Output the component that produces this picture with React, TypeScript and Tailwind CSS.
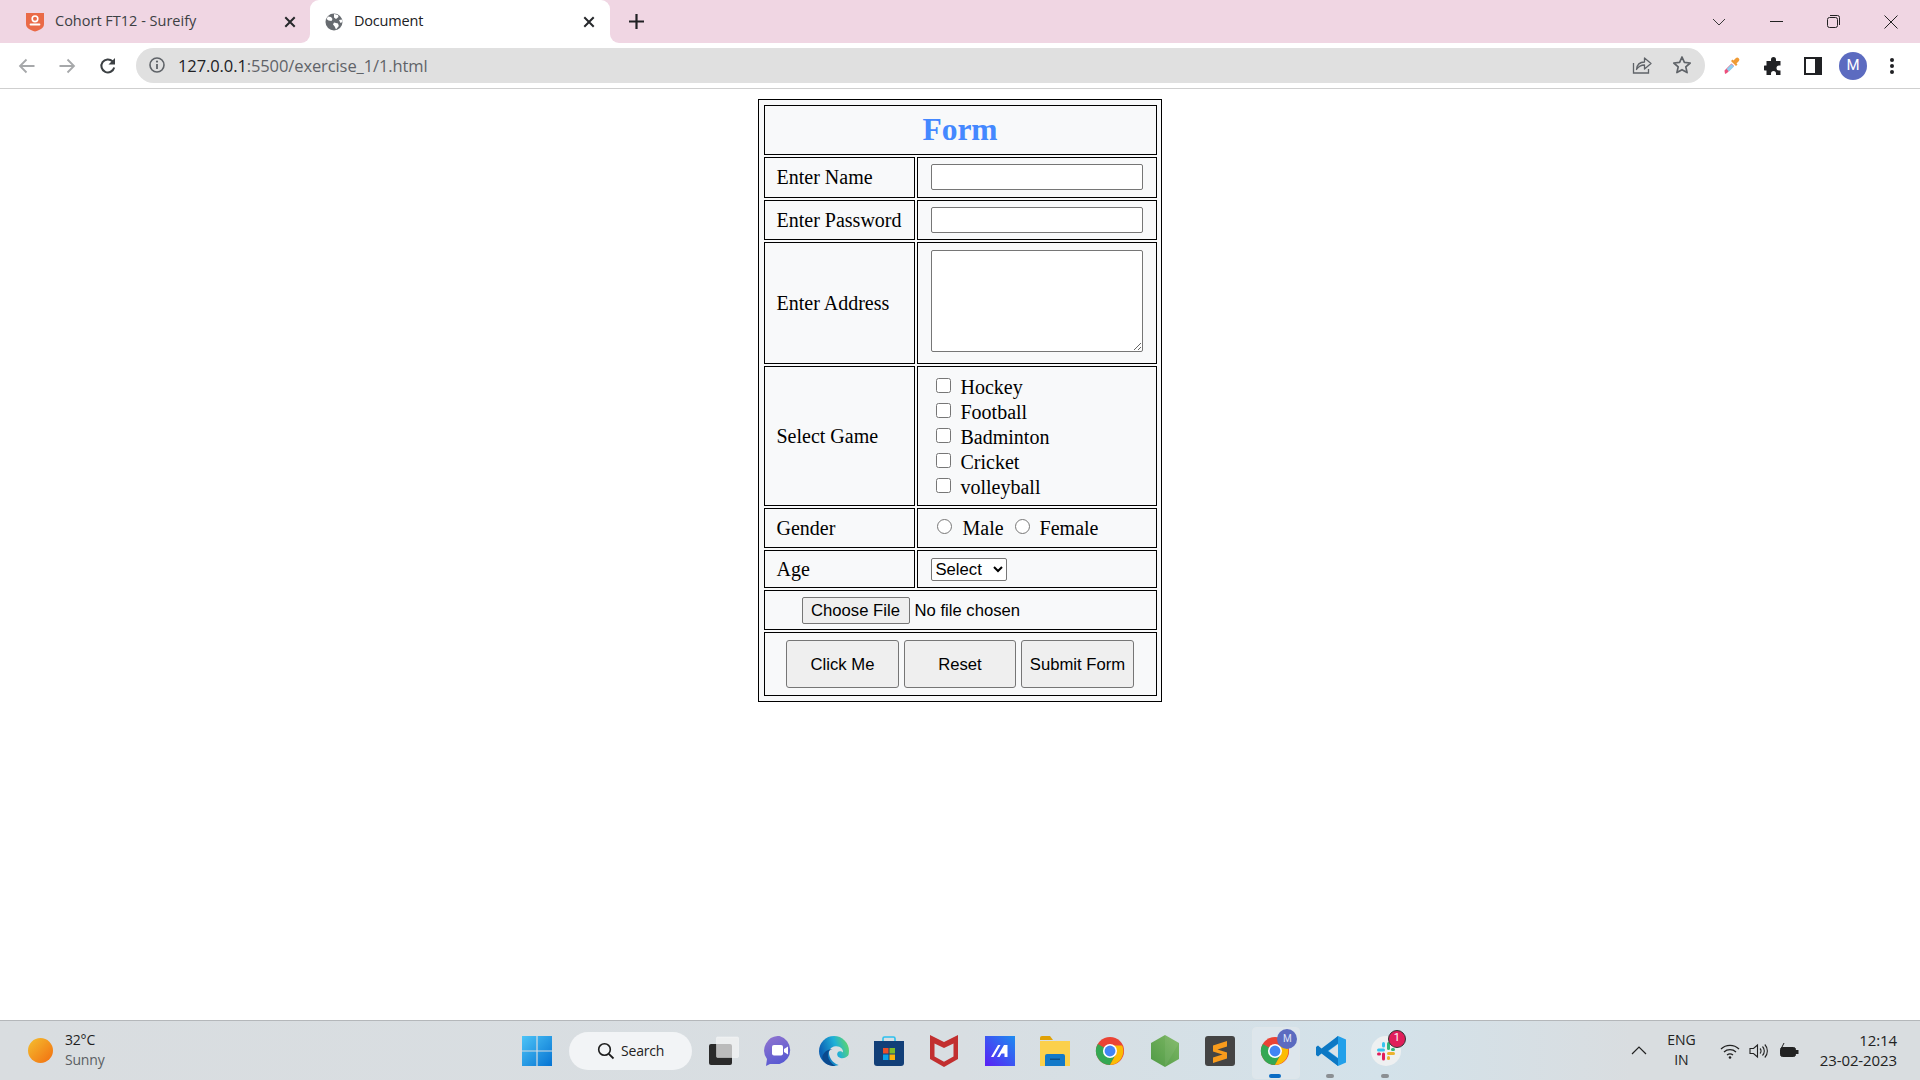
import React from "react";

const ui = "font-['Open_Sans','Noto_Sans',sans-serif]";

function TabClose() {
  return (
    <svg width="12" height="12" viewBox="0 0 12 12" className="shrink-0">
      <path d="M2 2l8 8M10 2l-8 8" stroke="#26282b" strokeWidth="2" strokeLinecap="square" />
    </svg>
  );
}

function TabStrip() {
  return (
    <div className="flex h-[43px] items-stretch bg-[#f0d6e3] text-[#3c4043] shrink-0">
      <div className="relative flex w-[310px] items-center pl-[25px] pr-[14px]">
        <svg width="20" height="20" viewBox="0 0 20 20" className="shrink-0">
          <path d="M1 1h18v11c0 4-4 6-9 7.500C5 18 1 16 1 12z" fill="#ea6a47" />
          <circle cx="10" cy="6.800" r="2.800" fill="none" stroke="#fff" strokeWidth="1.600" />
          <path d="M5.500 12.500h9" stroke="#fff" strokeWidth="1.800" strokeLinecap="round" />
        </svg>
        <span className={`ml-[10px] mb-[2px] flex-1 text-[14.5px] ${ui} whitespace-nowrap`}>Cohort FT12 - Sureify</span>
        <TabClose />
      </div>
      <div className="relative flex w-[300px] items-center rounded-t-[9px] bg-white pl-[15px] pr-[15px]">
        <div className="absolute bottom-0 left-[-9px] h-[9px] w-[9px] bg-white">
          <div className="h-full w-full rounded-br-[9px] bg-[#f0d6e3]" />
        </div>
        <div className="absolute bottom-0 right-[-9px] h-[9px] w-[9px] bg-white">
          <div className="h-full w-full rounded-bl-[9px] bg-[#f0d6e3]" />
        </div>
        <svg width="18" height="18" viewBox="0 0 18 18" className="shrink-0">
          <circle cx="9" cy="9" r="8.500" fill="#676b70" />
          <path d="M3 3.500l3 .5 1.500 2-1 2-3-.5L1.500 6zM9 1l4 1 .5 2-2.500 2L9 4.500zM9 9.500l4 1 .8 2.500-2.800 3.500-1.300-3-1.700-2zM14 7l2.800-.5.7 2.500-2 1z" fill="#fff" />
        </svg>
        <span className={`ml-[11px] mb-[2px] flex-1 text-[14.5px] ${ui} tracking-[-0.2px] text-[#202124]`}>Document</span>
        <TabClose />
      </div>
      <div className="flex w-[52px] items-center justify-center pl-[1px]">
        <svg width="15" height="15" viewBox="0 0 15 15">
          <path d="M7.500 0v15M0 7.500h15" stroke="#202124" strokeWidth="2.200" />
        </svg>
      </div>
      <div className="flex flex-1 items-center justify-end">
        <svg width="14" height="8" viewBox="0 0 14 8" className="mr-[44px]">
          <path d="M1 1l6 6 6-6" fill="none" stroke="#3a3a3a" strokeWidth="1" />
        </svg>
        <div className="h-[1.5px] w-[13px] bg-[#222] mr-[44px]" />
        <svg width="13" height="13" viewBox="0 0 13 13" className="mr-[44px]">
          <rect x="0.500" y="2.500" width="10" height="10" rx="2" fill="none" stroke="#222" />
          <path d="M3 .5h7.500a2 2 0 0 1 2 2V10" fill="none" stroke="#222" />
        </svg>
        <svg width="14" height="14" viewBox="0 0 14 14" className="mr-[22px]">
          <path d="M.5.5l13 13M13.500.5l-13 13" stroke="#222" strokeWidth="1" />
        </svg>
      </div>
    </div>
  );
}

function Toolbar() {
  return (
    <div className="flex h-[46px] items-center border-b border-[#cfcfcf] bg-white shrink-0">
      <div className="flex w-[136px] items-center">
        <svg width="18" height="16" viewBox="0 0 18 16" className="ml-[18px]">
          <path d="M16.500 8H2M8.500 1.500L2 8l6.500 6.500" fill="none" stroke="#a6a8aa" strokeWidth="1.800" />
        </svg>
        <svg width="18" height="16" viewBox="0 0 18 16" className="ml-[22px]">
          <path d="M1.500 8H16M9.500 1.500L16 8l-6.500 6.500" fill="none" stroke="#a6a8aa" strokeWidth="1.800" />
        </svg>
        <svg width="18" height="18" viewBox="0 0 18 18" className="ml-[23px]">
          <path d="M15.200 10.500A6.500 6.500 0 1 1 13.500 4.300" fill="none" stroke="#3c4043" strokeWidth="2" />
          <path d="M16 1v6.500H9.500z" fill="#3c4043" />
        </svg>
      </div>
      <div className="flex h-[35px] w-[1569px] items-center rounded-full bg-[#e0e0e0] mb-[1px]">
        <svg width="16" height="16" viewBox="0 0 16 16" className="ml-[13px]">
          <circle cx="8" cy="8" r="7" fill="none" stroke="#5f6368" strokeWidth="1.600" />
          <path d="M8 7v5" stroke="#5f6368" strokeWidth="1.800" />
          <circle cx="8" cy="4.600" r="1.100" fill="#5f6368" />
        </svg>
        <span className={`ml-[13px] mt-[2px] flex-1 text-[16.5px] tracking-[-0.1px] text-[#5f6368] ${ui}`}>
          <span className="text-[#202124]">127.0.0.1</span>:5500/exercise_1/1.html
        </span>
        <svg width="20" height="20" viewBox="0 0 20 20" className="mr-[20px]">
          <path d="M1.500 8v10h15v-4" fill="none" stroke="#5f6368" strokeWidth="1.300" />
          <path d="M4.500 14.500c.5-5 4-7.500 8-7.500V3l6.500 5.500-6.500 5.500v-4c-3.500 0-6 1.500-8 4.500z" fill="none" stroke="#5f6368" strokeWidth="1.300" strokeLinejoin="round" />
        </svg>
        <svg width="20" height="20" viewBox="0 0 20 20" className="mr-[13px]">
          <path d="M10 2l2.400 5.400 5.800.6-4.400 3.900 1.300 5.700L10 14.700 4.900 17.600l1.300-5.700L1.800 8l5.800-.6z" fill="none" stroke="#5f6368" strokeWidth="1.700" strokeLinejoin="round" />
        </svg>
      </div>
      <div className="flex flex-1 items-center">
        <svg width="18" height="20" viewBox="0 0 18 20" className="ml-[18px]">
          <path d="M2 18l2-1 7-7-2.500-2.500-7 7z" fill="#ec4f7c" />
          <path d="M3.500 13l5-5 2.500 2.500-5 5z" fill="#8fd0ef" />
          <path d="M8 5l5 5 1.500-1.500-1-1 2.200-2.200a2 2 0 0 0-3-3L10.500 4.500l-1-1z" fill="#ef9a35" />
        </svg>
        <svg width="20" height="20" viewBox="0 0 20 20" className="ml-[23px]">
          <path d="M7 3.500a2.500 2.500 0 0 1 5 0V5h4.500v4.500H15a2.500 2.500 0 0 0 0 5h1.500V19H12v-1.500a2.500 2.500 0 0 0-5 0V19H2.500v-4.500H1a2.500 2.500 0 0 1 0-5h1.500V5H7z" fill="#202124" />
        </svg>
        <svg width="18" height="18" viewBox="0 0 18 18" className="ml-[20px]">
          <rect width="18" height="18" fill="#202124" />
          <rect x="2" y="2" width="9" height="14" fill="#fff" />
        </svg>
        <div className="ml-[17px] flex h-[28px] w-[28px] items-center justify-center rounded-full bg-[#5c6bc0] font-['Roboto',sans-serif] text-[15px] text-white">M</div>
        <svg width="6" height="18" viewBox="0 0 6 18" className="ml-[22px]">
          <circle cx="3" cy="3" r="2" fill="#202124" />
          <circle cx="3" cy="9" r="2" fill="#202124" />
          <circle cx="3" cy="15" r="2" fill="#202124" />
        </svg>
      </div>
    </div>
  );
}

const cell = "border border-black align-middle";

function FormTable() {
  const games = ["Hockey", "Football", "Badminton", "Cricket", "volleyball"];
  return (
    <table className="mx-auto w-[404px] table-fixed border-separate border-spacing-[2.5px] border border-black bg-[#f8f9fa] p-[2.5px] font-['Liberation_Serif',serif] text-[20px] text-black">
      <colgroup>
        <col className="w-[151px]" />
        <col />
      </colgroup>
      <tbody>
        <tr>
          <td colSpan={2} className={`${cell} h-[50.5px] text-center text-[31.5px] font-bold text-[#4488ff]`}>Form</td>
        </tr>
        <tr>
          <td className={`${cell} h-[40.5px] pl-[12px]`}>Enter Name</td>
          <td className={`${cell} pl-[13px]`}>
            <input type="text" className="block h-[26px] w-[212px] rounded-[2px] border border-[#767676] bg-white" />
          </td>
        </tr>
        <tr>
          <td className={`${cell} h-[40.5px] pl-[12px]`}>Enter Password</td>
          <td className={`${cell} pl-[13px]`}>
            <input type="password" className="block h-[26px] w-[212px] rounded-[2px] border border-[#767676] bg-white" />
          </td>
        </tr>
        <tr>
          <td className={`${cell} h-[121.5px] pl-[12px]`}>Enter Address</td>
          <td className={`${cell} pl-[13px]`}>
            <textarea className="mb-[4px] block h-[102px] w-[212px] rounded-[2px] border border-[#767676] bg-white" />
          </td>
        </tr>
        <tr>
          <td className={`${cell} h-[140.5px] pl-[12px]`}>Select Game</td>
          <td className={`${cell} pl-[18px] pt-[3px]`}>
            {games.map((g) => (
              <div key={g} className="flex h-[25px] items-start gap-[10px] leading-[25px]">
                <input type="checkbox" className="mt-[3px] h-[15px] w-[15px] m-0" />
                <span>{g}</span>
              </div>
            ))}
          </td>
        </tr>
        <tr>
          <td className={`${cell} h-[40px] pl-[12px]`}>Gender</td>
          <td className={`${cell} pl-[19px]`}>
            <div className="flex h-[25px] items-start leading-[25px]">
              <input type="radio" name="g" className="mt-[3px] h-[15px] w-[15px]" />
              <span className="ml-[11px]">Male</span>
              <input type="radio" name="g" className="ml-[11px] mt-[3px] h-[15px] w-[15px]" />
              <span className="ml-[10px]">Female</span>
            </div>
          </td>
        </tr>
        <tr>
          <td className={`${cell} h-[38px] pl-[12px]`}>Age</td>
          <td className={`${cell} pl-[13px]`}>
            <select className="block h-[23px] w-[76px] rounded-[2px] border border-[#767676] bg-white font-['Liberation_Sans',sans-serif] text-[16.67px] text-black [appearance:auto]">
              <option>Select</option>
            </select>
          </td>
        </tr>
        <tr>
          <td colSpan={2} className={`${cell} h-[40px] pl-[37px]`}>
            <input type="file" className="block w-[340px] font-['Liberation_Sans',sans-serif] text-[16.67px] text-black file:mr-[5px] file:h-[27px] file:w-[108px] file:rounded-[2px] file:border file:border-[#767676] file:bg-[#efefef] file:font-['Liberation_Sans',sans-serif] file:text-[16.67px] file:text-black" />
          </td>
        </tr>
        <tr>
          <td colSpan={2} className={`${cell} h-[64px]`}>
            <div className="flex justify-center gap-[5px]">
              {["Click Me", "Reset", "Submit Form"].map((b) => (
                <button key={b} className="h-[48px] w-[112.5px] rounded-[3px] border border-[#767676] bg-[#efefef] font-['Liberation_Sans',sans-serif] text-[16.67px] text-black">{b}</button>
              ))}
            </div>
          </td>
        </tr>
      </tbody>
    </table>
  );
}

function Chrome({ size = 32 }: { size?: number }) {
  return (
    <svg width={size} height={size} viewBox="0 0 32 32">
      <circle cx="16" cy="16" r="15" fill="#ea4335" />
      <path d="M16 16 L3 8.500 A15 15 0 0 0 16 31 L23 18z" fill="#34a853" />
      <path d="M16 10h13a15 15 0 0 1-13 21l7-13a7 7 0 0 0-7-8z" fill="#fbbc04" />
      <circle cx="16" cy="16" r="7.500" fill="#fff" />
      <circle cx="16" cy="16" r="5.800" fill="#4285f4" />
    </svg>
  );
}

function Slot({ children, className = "" }: { children: React.ReactNode; className?: string }) {
  return <div className={`flex h-[60px] w-[55.2px] shrink-0 items-center justify-center ${className}`}>{children}</div>;
}

function Taskbar() {
  return (
    <div className="flex h-[60px] shrink-0 items-center border-t border-[#b4b7ba] bg-[linear-gradient(90deg,#d9dde0_0%,#d8dee2_50%,#d3e2ea_72%,#d9dde0_85%)]">
      <div className="flex w-[522px] shrink-0 items-center">
        <div className="ml-[28px] h-[25px] w-[25px] rounded-full bg-[linear-gradient(135deg,#f4c030,#f26d0f)]" />
        <div className={`ml-[12px] mb-[2px] text-[14px] leading-[20px] ${ui} tracking-[-0.2px]`}>
          <div className="text-[#1f1f1f]">32°C</div>
          <div className="text-[#5b5f63]">Sunny</div>
        </div>
      </div>
      <svg width="30" height="30" viewBox="0 0 30 30" className="shrink-0">
        <defs>
          <linearGradient id="w" x1="0" y1="0" x2="1" y2="1">
            <stop offset="0" stopColor="#4dc4f7" />
            <stop offset="1" stopColor="#0573d2" />
          </linearGradient>
        </defs>
        <path d="M0 0h14.400v14.400H0zM15.600 0H30v14.400H15.600zM0 15.600h14.400V30H0zM15.600 15.600H30V30H15.600z" fill="url(#w)" />
      </svg>
      <div className="ml-[17px] flex h-[38px] w-[123px] shrink-0 items-center rounded-full bg-[#f2f4f6] pl-[28px]">
        <svg width="18" height="18" viewBox="0 0 18 18">
          <circle cx="7.500" cy="7.500" r="5.800" fill="none" stroke="#1c1c1c" strokeWidth="1.600" />
          <path d="M11.800 11.800L16.500 16.500" stroke="#1c1c1c" strokeWidth="1.800" />
        </svg>
        <span className={`ml-[6px] text-[14px] ${ui} tracking-[-0.2px] text-[#222]`}>Search</span>
      </div>
      <div className="ml-[4px] flex">
        <Slot>
          <svg width="30" height="30" viewBox="0 0 30 30">
            <rect x="0" y="8" width="23" height="21" rx="2" fill="#2a2a2a" />
            <rect x="7.500" y="1" width="22" height="20.500" rx="1" fill="#f4f4f4" fillOpacity="0.72" stroke="#fff" strokeOpacity="0.4" />
          </svg>
        </Slot>
        <Slot>
          <svg width="30" height="30" viewBox="0 0 30 30">
            <defs>
              <linearGradient id="t" x1="0.2" y1="0" x2="0.6" y2="1">
                <stop offset="0" stopColor="#8e73cf" />
                <stop offset="1" stopColor="#5558d2" />
              </linearGradient>
            </defs>
            <path d="M15.500 0a14.500 14.500 0 0 1 0 28H6l-4 2 1-7A14.500 14.500 0 0 1 15.500 0z" fill="url(#t)" />
            <rect x="8" y="9" width="11" height="10.500" rx="2" fill="#fff" />
            <path d="M20 13l4-2.500v8L20 16z" fill="#fff" />
          </svg>
        </Slot>
        <Slot>
          <svg width="30" height="30" viewBox="0 0 30 30">
            <defs>
              <linearGradient id="e" x1="0.1" y1="0.6" x2="1" y2="0.3">
                <stop offset="0" stopColor="#0d63b5" />
                <stop offset="0.55" stopColor="#1fb0d8" />
                <stop offset="1" stopColor="#5fd66a" />
              </linearGradient>
            </defs>
            <circle cx="15" cy="15" r="15" fill="url(#e)" />
            <path d="M30 18.500c-1.800 2.800-5.500 4.200-8.500 3.500-3-.8-4.200-3.600-2.500-6 .9-1.200 3.800-1 5 .5.600-3.300-2.800-6.800-7.500-6.300-5 .5-7.200 4.500-6.300 8.500 1 4.800 5 9.300 11 10.800 4-1.800 7.500-5.800 8.800-11z" fill="#d9dee2" />
            <path d="M13.500 13c-3 .5-5 3-4.500 7 .5 3.500 3 7.500 7.500 10-6 .5-10.500-2-13-6.500C2 18 8 13 13.500 13z" fill="#0b4a8f" />
          </svg>
        </Slot>
        <Slot>
          <svg width="30" height="30" viewBox="0 0 30 30">
            <path d="M9 5V2.500A1.500 1.500 0 0 1 10.500 1h9A1.500 1.500 0 0 1 21 2.500V5" fill="none" stroke="#2cc0ee" strokeWidth="1.600" />
            <path d="M0 5h30v22a3 3 0 0 1-3 3H3a3 3 0 0 1-3-3z" fill="#123f78" />
            <rect x="9" y="12" width="5.500" height="5.500" fill="#ea4f2a" />
            <rect x="15.500" y="12" width="5.500" height="5.500" fill="#7fbb2a" />
            <rect x="9" y="18.500" width="5.500" height="5.500" fill="#0ca2e8" />
            <rect x="15.500" y="18.500" width="5.500" height="5.500" fill="#fbb30a" />
          </svg>
        </Slot>
        <Slot>
          <svg width="28" height="32" viewBox="0 0 28 32">
            <path fillRule="evenodd" d="M0 0l14 7 14-7v24l-14 8-14-8zM4.500 8.500v13l9.500 5.300 9.500-5.300v-13l-9.500 4.500z" fill="#c22f2f" />
          </svg>
        </Slot>
        <Slot>
          <svg width="30" height="30" viewBox="0 0 30 30">
            <defs>
              <linearGradient id="m" x1="0" y1="1" x2="1" y2="0">
                <stop offset="0" stopColor="#5a1ff5" />
                <stop offset="1" stopColor="#1d8cf0" />
              </linearGradient>
            </defs>
            <rect width="30" height="30" fill="url(#m)" />
            <path d="M6 21l7-12h2.500l-7 12zM12 21l7-12h3.500v12h-3v-3.500h-3L14.500 21z" fill="#fff" />
          </svg>
        </Slot>
        <Slot>
          <svg width="30" height="30" viewBox="0 0 30 30">
            <path d="M0 2a2 2 0 0 1 2-2h8l3 4h-13z" fill="#e0a106" />
            <path d="M0 5h30v25H0z" fill="#fbd04b" />
            <path d="M5 20a2 2 0 0 1 2-2h16a2 2 0 0 1 2 2v10H5z" fill="#1279c9" />
            <rect x="10" y="22.500" width="10" height="1.500" fill="#0b4f8a" />
          </svg>
        </Slot>
        <Slot>
          <Chrome size={30} />
        </Slot>
        <Slot>
          <svg width="28" height="32" viewBox="0 0 28 32">
            <defs>
              <linearGradient id="n" x1="0" y1="1" x2="1" y2="0">
                <stop offset="0" stopColor="#4f9a45" />
                <stop offset="1" stopColor="#7fb865" />
              </linearGradient>
            </defs>
            <path d="M14 0l14 8v16l-14 8-14-8V8z" fill="url(#n)" />
            <path d="M14 32L28 8l-14-8z" fill="#ffffff" fillOpacity="0.06" />
          </svg>
        </Slot>
        <Slot>
          <svg width="30" height="30" viewBox="0 0 30 30">
            <rect width="30" height="30" rx="3" fill="#444" />
            <path d="M22 5v5.500L12.500 13.500 22 16.500v6L8 27v-5.500l9.500-3L8 15.500V9.500z" fill="#f89b1c" />
          </svg>
        </Slot>
        <Slot className="relative">
          <div className="absolute bottom-[2px] left-[0px] top-[6px] w-[48px] rounded-[4px] border border-[#dfe6ea] bg-[#dde6ec] ml-[4px]" />
          <div className="relative">
            <Chrome size={30} />
            <div className="absolute right-[-7px] top-[-7px] flex h-[20px] w-[20px] items-center justify-center rounded-full bg-[#5c6bc0] font-['Roboto',sans-serif] text-[10px] text-[#dfe3f5]">M</div>
          </div>
          <div className="absolute bottom-[3px] left-[21px] h-[4px] w-[12px] rounded-full bg-[#0a6cc4]" />
        </Slot>
        <Slot className="relative">
          <svg width="30" height="30" viewBox="0 0 30 30">
            <path d="M22 0l8 3.500v23L22 30 5 16z" fill="#22a0ea" />
            <path d="M22 0v7.500L11.500 15 22 22.500V30L5.500 17.500 2 20.500 0 19v-8l2-1.500 3.500 3z" fill="#0c78c4" />
            <path d="M22 8v14l-9.500-7z" fill="#d9e2e8" />
          </svg>
          <div className="absolute bottom-[3px] left-[23px] h-[4px] w-[8px] rounded-full bg-[#8b8f93]" />
        </Slot>
        <Slot className="relative">
          <div className="relative flex h-[30px] w-[30px] items-center justify-center rounded-full bg-[#eef0f1]">
            <svg width="20" height="20" viewBox="0 0 20 20">
              <rect x="1" y="7.500" width="8" height="3" rx="1.500" fill="#36c5f0" />
              <rect x="6" y="1" width="3" height="5.500" rx="1.500" fill="#36c5f0" />
              <rect x="11" y="1" width="3" height="8" rx="1.500" fill="#2eb67d" />
              <rect x="15" y="7" width="4" height="3" rx="1.500" fill="#2eb67d" />
              <rect x="11" y="11" width="8" height="3" rx="1.500" fill="#ecb22e" />
              <rect x="11" y="15" width="3" height="4" rx="1.500" fill="#ecb22e" />
              <rect x="6" y="11.500" width="3" height="8" rx="1.500" fill="#e01e5a" />
              <rect x="1" y="11.500" width="4" height="3" rx="1.500" fill="#e01e5a" />
            </svg>
            <div className="absolute right-[-5px] top-[-6px] flex h-[18px] w-[18px] items-center justify-center rounded-full border border-[#333] bg-[#e01e5a] font-['Roboto',sans-serif] text-[11px] text-white">1</div>
          </div>
          <div className="absolute bottom-[3px] left-[23px] h-[4px] w-[8px] rounded-full bg-[#8b8f93]" />
        </Slot>
      </div>
      <div className="flex flex-1 items-center">
        <svg width="16" height="9" viewBox="0 0 16 9" className="ml-[218px]">
          <path d="M1 8l7-7 7 7" fill="none" stroke="#222" strokeWidth="1.200" />
        </svg>
        <div className={`ml-[18px] mb-[2px] w-[32px] text-center text-[14px] leading-[20px] ${ui} text-[#222]`}>
          <div>ENG</div>
          <div>IN</div>
        </div>
      </div>
      <div className="mr-[23px] flex items-center">
        <svg width="20" height="16" viewBox="0 0 20 16" className="mr-[9px]">
          <path d="M1 6a13 13 0 0 1 18 0M4 9a9 9 0 0 1 12 0M7 12a5 5 0 0 1 6 0" fill="none" stroke="#222" strokeWidth="1.300" />
          <circle cx="10" cy="14.500" r="1.300" fill="#222" />
        </svg>
        <svg width="20" height="16" viewBox="0 0 20 16" className="mr-[10px]">
          <path d="M1 5.500h3.500L8.500 2v12l-4-3.500H1z" fill="none" stroke="#222" strokeWidth="1.100" />
          <path d="M11 5.500a3.500 3.500 0 0 1 0 5M13.500 3.500a6.500 6.500 0 0 1 0 9M15.800 1.500a9.500 9.500 0 0 1 0 13" fill="none" stroke="#222" strokeWidth="1.100" />
        </svg>
        <svg width="20" height="16" viewBox="0 0 20 16" className="mr-[21px]">
          <rect x="1.500" y="4.500" width="15" height="9" rx="2" fill="#222" stroke="#222" />
          <rect x="17" y="7" width="2.500" height="4" fill="#222" />
          <path d="M5 0L2.500 5H5L3.500 8.500" fill="none" stroke="#222" strokeWidth="1" />
        </svg>
        <div className={`mb-[2px] text-right text-[15px] leading-[20px] ${ui} text-[#222] tracking-[-0.1px]`}>
          <div>12:14</div>
          <div>23-02-2023</div>
        </div>
      </div>
    </div>
  );
}

export default function App() {
  return (
    <div className="flex h-screen w-screen flex-col overflow-hidden bg-white">
      <TabStrip />
      <Toolbar />
      <main className="flex-1 pt-[10px]">
        <FormTable />
      </main>
      <Taskbar />
    </div>
  );
}
